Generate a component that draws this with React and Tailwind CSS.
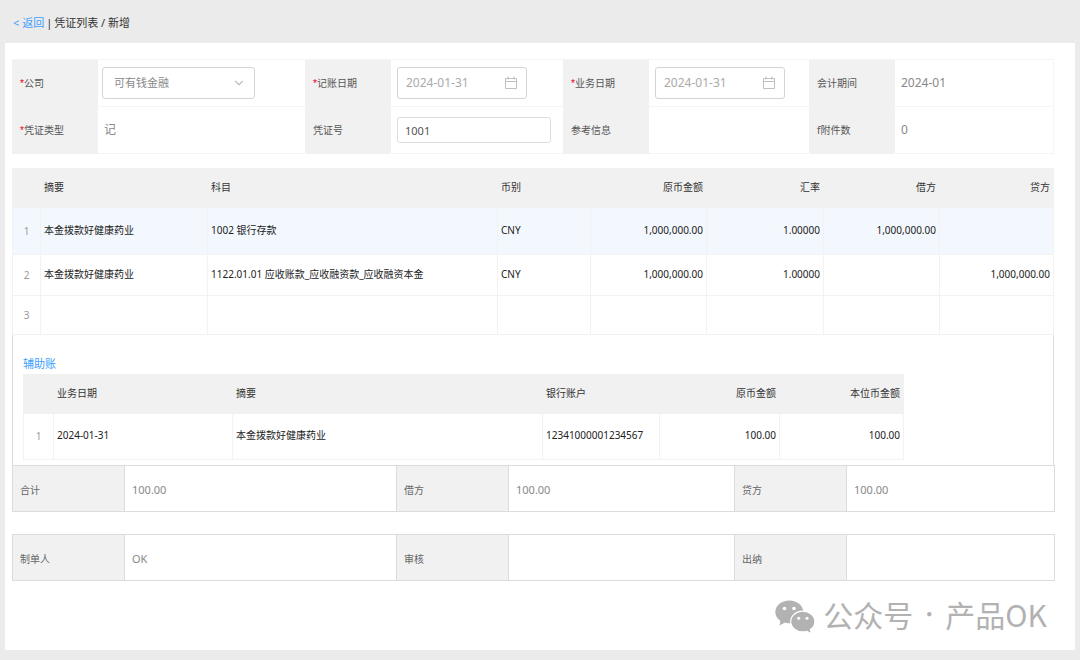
import { useState } from 'react'
import { ChevronDown } from 'lucide-react'

const entryColumns = [
  { label: '', width: 'w-[29px]' },
  { label: '摘要', width: 'w-[167px]' },
  { label: '科目', width: 'w-[290px]' },
  { label: '币别', width: 'w-[93px]' },
  { label: '原币金额', width: 'w-[116px]', right: true },
  { label: '汇率', width: 'w-[117px]', right: true },
  { label: '借方', width: 'w-[116px]', right: true },
  { label: '贷方', width: 'w-[114px]', right: true },
]

const entryRows = [
  { height: 'h-[47px]', active: true, cells: ['本金拨款好健康药业', '1002 银行存款', 'CNY', '1,000,000.00', '1.00000', '1,000,000.00', ''] },
  { height: 'h-[41px]', cells: ['本金拨款好健康药业', '1122.01.01 应收账款_应收融资款_应收融资本金', 'CNY', '1,000,000.00', '1.00000', '', '1,000,000.00'] },
  { height: 'h-[39px]', cells: ['', '', '', '', '', '', ''] },
]

const auxColumns = [
  { label: '', width: 'w-[31px]' },
  { label: '业务日期', width: 'w-[179px]' },
  { label: '摘要', width: 'w-[310px]' },
  { label: '银行账户', width: 'w-[117px]' },
  { label: '原币金额', width: 'w-[120px]', right: true },
  { label: '本位币金额', width: 'w-[124px]', right: true },
]

const auxRows = [
  { height: 'h-[46px]', cells: ['2024-01-31', '本金拨款好健康药业', '12341000001234567', '100.00', '100.00'] },
]

function CalendarIcon() {
  return (
    <svg viewBox="0 0 14 14" className="w-[14px] h-[14px] shrink-0" fill="none" stroke="#bfbfbf" strokeWidth="1">
      <path d="M1.5 2.5h11v10h-11zM1.5 5.5h11M4 0.5v3M10 0.5v3" />
    </svg>
  )
}

function WechatIcon() {
  return (
    <svg viewBox="0 -5 40 39" className="w-10 h-[39px] shrink-0">
      <path
        fill="#b2b2b2"
        d="M14.3 0.5C6.500 0.5 0.300 5.500 0.300 12c0 3.600 2 6.700 5.100 8.900L4.600 25.500l5.200-2.900c1.600 0.500 3 0.700 4.500 0.700 7.800 0 14-5.100 14-11.400S22.100 0.500 14.300 0.500z"
      />
      <path
        fill="#b2b2b2"
        stroke="#fff"
        strokeWidth="1.2"
        d="M27.800 11.200c-6.700 0-12.100 4.600-12.100 10.300s5.400 10.400 12.100 10.400c1.400 0 2.800-0.200 4.100-0.600l4.700 2.500-1.200-4.200c2.800-1.900 4.500-4.800 4.500-8.100 0-5.700-5.400-10.300-12.100-10.300z"
      />
      <g fill="#fff">
        <circle cx="9.500" cy="8.500" r="1.800" />
        <circle cx="19" cy="8.500" r="1.800" />
        <circle cx="23.700" cy="18.200" r="1.500" />
        <circle cx="32" cy="18.200" r="1.500" />
      </g>
    </svg>
  )
}

function FieldLabel({ htmlFor, required, children }) {
  return (
    <label htmlFor={htmlFor} className="flex items-center bg-[#f1f1f1] pl-2 text-[10px] text-[#555]">
      {required && <span className="font-['Liberation_Sans',sans-serif] text-[#e60012]">*</span>}
      {children}
    </label>
  )
}

function FieldValue({ children }) {
  return (
    <div className="flex items-center border-b border-[#f5f5f5] px-[6px] text-xs text-[#888]">
      {children}
    </div>
  )
}

function DateInput({ id, value, onChange }) {
  return (
    <div className="flex items-center w-[130px] h-8 border border-[#d4d4d4] rounded-[3px] px-2">
      <input
        id={id}
        type="text"
        value={value}
        onChange={e => onChange(e.target.value)}
        className="min-w-0 flex-1 bg-transparent text-xs text-[#aaa] focus:outline-none"
      />
      <CalendarIcon />
    </div>
  )
}

function DataTable({ columns, rows, className }) {
  return (
    <table className={`table-fixed border-separate border-spacing-0 text-[10px] ${className}`}>
      <thead>
        <tr className="h-10 bg-[#f1f1f1] text-[#333]">
          {columns.map((c, i) => (
            <th key={i} className={`${c.width} font-normal pl-[3px] pr-1 pt-0 pb-[2px] ${c.right ? 'text-right' : 'text-left'}`}>
              {c.label}
            </th>
          ))}
        </tr>
      </thead>
      <tbody>
        {rows.map((row, r) => (
          <tr key={r} className={`${row.height} ${row.active ? 'bg-[#f3f8fe]' : 'bg-white'} text-[#222]`}>
            <td className="border-l border-r border-b border-[#f2f2f2] text-center text-[#999]">{r + 1}</td>
            {row.cells.map((cell, i) => (
              <td
                key={i}
                className={`border-r border-b border-[#f2f2f2] pl-[3px] pr-[3px] pt-0 pb-[2px] whitespace-nowrap ${columns[i + 1].right ? 'text-right' : 'text-left'}`}
              >
                {cell}
              </td>
            ))}
          </tr>
        ))}
      </tbody>
    </table>
  )
}

function SummaryTable({ items }) {
  const valueWidths = ['w-[272px]', 'w-[226px]', 'w-[208px]']
  return (
    <table className="w-full table-fixed border-separate border-spacing-0 border-t border-l border-[#dcdcdc]">
      <tbody>
        <tr className="h-[46px]">
          {items.map(([label, value], i) => [
            <th key={label} className="w-[112px] border-r border-b border-[#dcdcdc] bg-[#f1f1f1] px-[7px] pt-[3px] pb-0 text-left font-normal text-[10px] text-[#666]">
              {label}
            </th>,
            <td key={label + '-value'} className={`${valueWidths[i]} border-r border-b border-[#dcdcdc] px-[7px] pt-[3px] pb-0 text-[11px] text-[#888]`}>
              {value}
            </td>,
          ])}
        </tr>
      </tbody>
    </table>
  )
}

export default function App() {
  const [form, setForm] = useState({
    company: '可有钱金融',
    bookDate: '2024-01-31',
    bizDate: '2024-01-31',
    voucherNo: '1001',
  })
  const update = (key, value) => setForm(f => ({ ...f, [key]: value }))

  return (
    <div className="min-h-screen bg-[#ebebeb] px-[5px] pb-[10px] font-['Noto_Sans','Noto_Sans_CJK_SC',sans-serif]">
      {/* Breadcrumb */}
      <nav className="flex items-center h-[43px] pt-1 pl-2 gap-[2px] text-[11px] text-[#333]">
        <a href="#" className="text-[#409eff]">&lt; 返回</a>
        <span>|</span>
        <span>凭证列表 / 新增</span>
      </nav>

      <main className="bg-white pt-4 pl-[7px] pr-[21px] pb-4">
        {/* Voucher header */}
        <form className="grid grid-cols-[86px_207fr_86px_172fr_86px_160fr_86px_158fr] auto-rows-[47px] border-t border-r border-[#f5f5f5]">
          <FieldLabel htmlFor="company" required>公司</FieldLabel>
          <FieldValue>
            <div className="relative w-[153px] -ml-[2px]">
              <select
                id="company"
                value={form.company}
                onChange={e => update('company', e.target.value)}
                className="appearance-none w-full h-8 border border-[#d4d4d4] rounded-[3px] pl-[11px] text-[11px] text-[#888] bg-white focus:outline-none"
              >
                <option>可有钱金融</option>
              </select>
              <ChevronDown size={14} strokeWidth={2} className="absolute right-[9px] top-[9px] text-[#bfbfbf] pointer-events-none" />
            </div>
          </FieldValue>
          <FieldLabel htmlFor="book-date" required>记账日期</FieldLabel>
          <FieldValue>
            <DateInput id="book-date" value={form.bookDate} onChange={v => update('bookDate', v)} />
          </FieldValue>
          <FieldLabel htmlFor="biz-date" required>业务日期</FieldLabel>
          <FieldValue>
            <DateInput id="biz-date" value={form.bizDate} onChange={v => update('bizDate', v)} />
          </FieldValue>
          <FieldLabel>会计期间</FieldLabel>
          <FieldValue>2024-01</FieldValue>

          <FieldLabel required>凭证类型</FieldLabel>
          <FieldValue>记</FieldValue>
          <FieldLabel htmlFor="voucher-no">凭证号</FieldLabel>
          <FieldValue>
            <input
              id="voucher-no"
              type="text"
              value={form.voucherNo}
              onChange={e => update('voucherNo', e.target.value)}
              className="w-[154px] h-[26px] border border-[#dedede] rounded-[3px] pl-[7px] text-[11px] text-[#555] focus:outline-none"
            />
          </FieldValue>
          <FieldLabel>参考信息</FieldLabel>
          <FieldValue />
          <FieldLabel>f附件数</FieldLabel>
          <FieldValue>0</FieldValue>
        </form>

        {/* Entries */}
        <DataTable columns={entryColumns} rows={entryRows} className="w-full mt-[14px]" />

        {/* Auxiliary ledger */}
        <section className="border-l border-r border-[#dcdcdc] px-[10px] pt-[21px] pb-[5px]">
          <h2 className="text-[11px] leading-4 text-[#409eff] mb-[2px]">辅助账</h2>
          <DataTable columns={auxColumns} rows={auxRows} className="w-[881px] max-w-full" />
        </section>

        <SummaryTable items={[['合计', '100.00'], ['借方', '100.00'], ['贷方', '100.00']]} />
        <div className="mt-[22px]">
          <SummaryTable items={[['制单人', 'OK'], ['审核', ''], ['出纳', '']]} />
        </div>

        {/* Account signature */}
        <div className="flex items-center justify-end mt-[13px] pr-[7px] font-['Noto_Sans_CJK_SC',sans-serif] text-[30px] leading-10 text-[#b2b2b2]">
          <WechatIcon />
          <span className="ml-2">公众号</span>
          <span className="w-8 text-center text-xl">·</span>
          <span>产品OK</span>
        </div>
      </main>
    </div>
  )
}
